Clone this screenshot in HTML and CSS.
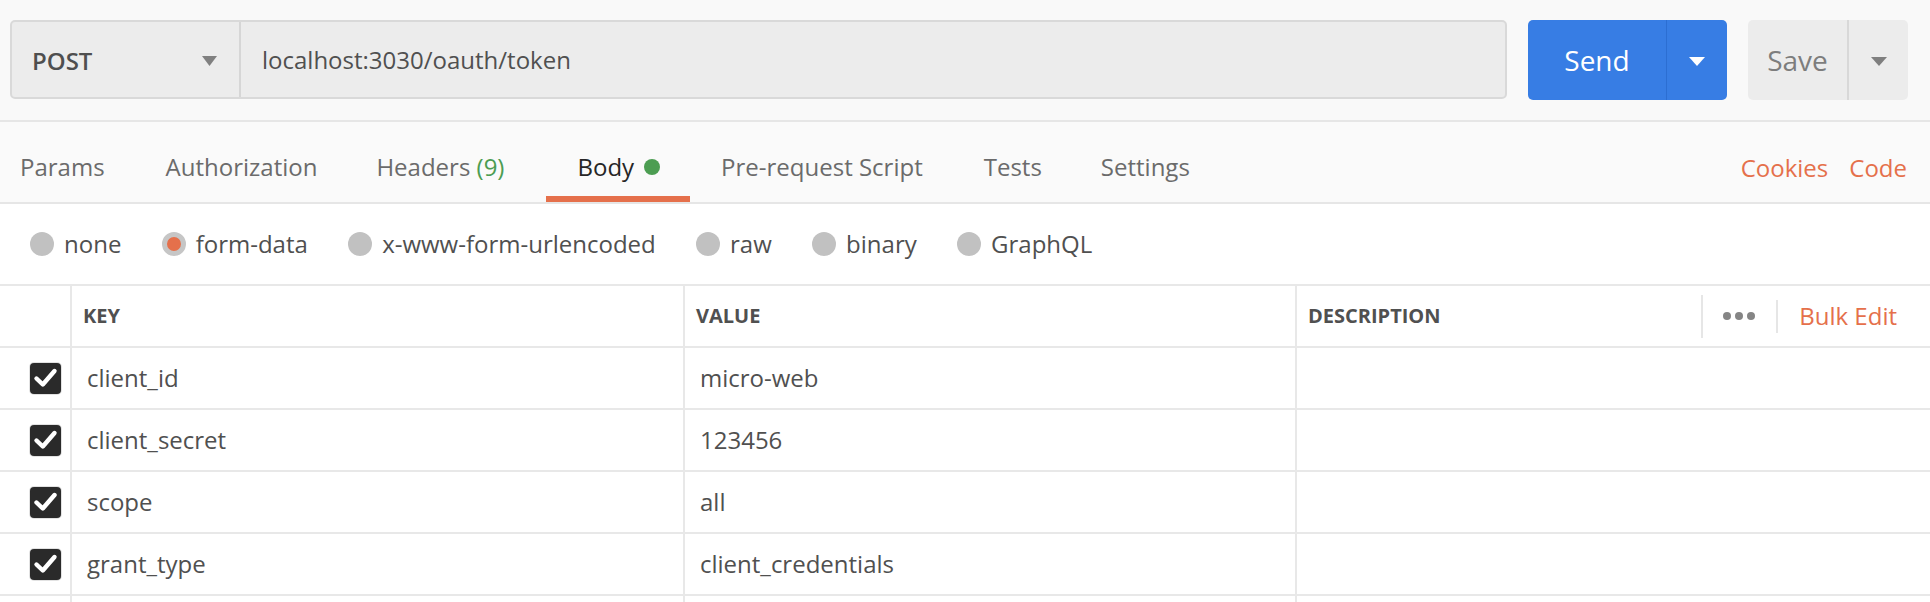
FILE: index.html
```html
<!DOCTYPE html>
<html>
<head>
<meta charset="utf-8">
<link rel="stylesheet" href="styles.css">
</head>
<body>
<div class="app">
  <div class="topbar">
    <div class="url-group">
      <div class="method">
        <span class="method-label">POST</span>
        <svg class="caret" width="15" height="10" viewBox="0 0 15 10"><path d="M0 0 H15 L7.5 10 Z" fill="#808080"/></svg>
      </div>
      <div class="url">localhost:3030/oauth/token</div>
    </div>
    <div class="send-btn">
      <span class="send-label">Send</span>
      <span class="send-caret"><svg width="16" height="9" viewBox="0 0 16 9"><path d="M0 0 H16 L8 9 Z" fill="#ffffff"/></svg></span>
    </div>
    <div class="save-btn">
      <span class="save-label">Save</span>
      <span class="save-caret"><svg width="16" height="9" viewBox="0 0 16 9"><path d="M0 0 H16 L8 9 Z" fill="#7f7f7f"/></svg></span>
    </div>
  </div>

  <div class="tabs">
    <div class="tab tab-first">Params</div>
    <div class="tab tab-auth">Authorization</div>
    <div class="tab tab-headers">Headers <span class="count">(9)</span></div>
    <div class="tab active">Body<span class="dot"></span></div>
    <div class="tab">Pre-request Script</div>
    <div class="tab tab-tests">Tests</div>
    <div class="tab">Settings</div>
    <div class="tabs-right">
      <span class="link">Cookies</span>
      <span class="link">Code</span>
    </div>
  </div>

  <div class="body-types">
    <div class="radio-item"><span class="radio"></span><span>none</span></div>
    <div class="radio-item"><span class="radio checked"></span><span>form-data</span></div>
    <div class="radio-item"><span class="radio"></span><span>x-www-form-urlencoded</span></div>
    <div class="radio-item"><span class="radio"></span><span>raw</span></div>
    <div class="radio-item"><span class="radio"></span><span>binary</span></div>
    <div class="radio-item"><span class="radio"></span><span>GraphQL</span></div>
  </div>

  <div class="kv-table">
    <div class="kv-row kv-head">
      <div class="cell cell-check"></div>
      <div class="cell head-cell">KEY</div>
      <div class="cell head-cell">VALUE</div>
      <div class="cell head-cell head-desc">
        <span>DESCRIPTION</span>
        <div class="head-tools">
          <span class="vsep tall"></span>
          <span class="dots"><i></i><i></i><i></i></span>
          <span class="vsep short"></span>
          <span class="link bulk">Bulk Edit</span>
        </div>
      </div>
    </div>
    <div class="kv-row">
      <div class="cell cell-check"><span class="checkbox"><svg width="31" height="31" viewBox="0 0 31 31"><path d="M6.5 15.5 L12.8 21.5 L24.5 8" fill="none" stroke="#fff" stroke-width="4.4" stroke-linecap="round" stroke-linejoin="round"/></svg></span></div>
      <div class="cell text-cell">client_id</div>
      <div class="cell text-cell">micro-web</div>
      <div class="cell text-cell"></div>
    </div>
    <div class="kv-row">
      <div class="cell cell-check"><span class="checkbox"><svg width="31" height="31" viewBox="0 0 31 31"><path d="M6.5 15.5 L12.8 21.5 L24.5 8" fill="none" stroke="#fff" stroke-width="4.4" stroke-linecap="round" stroke-linejoin="round"/></svg></span></div>
      <div class="cell text-cell">client_secret</div>
      <div class="cell text-cell">123456</div>
      <div class="cell text-cell"></div>
    </div>
    <div class="kv-row">
      <div class="cell cell-check"><span class="checkbox"><svg width="31" height="31" viewBox="0 0 31 31"><path d="M6.5 15.5 L12.8 21.5 L24.5 8" fill="none" stroke="#fff" stroke-width="4.4" stroke-linecap="round" stroke-linejoin="round"/></svg></span></div>
      <div class="cell text-cell">scope</div>
      <div class="cell text-cell">all</div>
      <div class="cell text-cell"></div>
    </div>
    <div class="kv-row">
      <div class="cell cell-check"><span class="checkbox"><svg width="31" height="31" viewBox="0 0 31 31"><path d="M6.5 15.5 L12.8 21.5 L24.5 8" fill="none" stroke="#fff" stroke-width="4.4" stroke-linecap="round" stroke-linejoin="round"/></svg></span></div>
      <div class="cell text-cell">grant_type</div>
      <div class="cell text-cell">client_credentials</div>
      <div class="cell text-cell"></div>
    </div>
    <div class="kv-row">
      <div class="cell cell-check"></div>
      <div class="cell text-cell"></div>
      <div class="cell text-cell"></div>
      <div class="cell text-cell"></div>
    </div>
  </div>
</div>
</body>
</html>
```

FILE: styles.css
```css
html, body {
  margin: 0;
  padding: 0;
  background: #ffffff;
}

body {
  font-family: "Open Sans", "DejaVu Sans", sans-serif;
  color: #505050;
  overflow: hidden;
}

.app {
  width: 1930px;
  height: 602px;
  overflow: hidden;
}

/* ---------- top bar ---------- */
.topbar {
  display: flex;
  align-items: flex-start;
  height: 122px;
  box-sizing: border-box;
  padding: 20px 22px 0 10px;
  background: #f9f9f9;
  border-bottom: 2px solid #e6e6e6;
}

.url-group {
  flex: 1;
  display: flex;
  height: 79px;
  box-sizing: border-box;
  margin-right: 21px;
  background: #ececec;
  border: 2px solid #d9d9d9;
  border-radius: 5px;
}

.method {
  width: 229px;
  flex: none;
  box-sizing: border-box;
  display: flex;
  align-items: center;
  justify-content: space-between;
  padding: 2px 22px 0 20px;
  border-right: 2px solid #d6d6d6;
}

.method-label {
  font-size: 24px;
  line-height: 32px;
  font-weight: 600;
  color: #4f4f4f;
}

.caret {
  display: block;
}

.url {
  display: flex;
  align-items: center;
  padding-left: 21px;
  font-size: 24px;
  line-height: 32px;
  color: #505050;
}

.send-btn {
  display: flex;
  width: 199px;
  height: 80px;
  flex: none;
  border-radius: 5px;
  background: #377de4;
  color: #ffffff;
  margin-right: 21px;
}

.send-label {
  width: 138px;
  display: flex;
  align-items: center;
  justify-content: center;
  font-size: 28px;
  line-height: 36px;
  font-weight: 500;
  border-right: 1px solid #2c6ed2;
}

.send-caret,
.save-caret {
  flex: 1;
  display: flex;
  align-items: center;
  justify-content: center;
  padding-top: 2px;
}

.save-btn {
  display: flex;
  width: 160px;
  height: 80px;
  flex: none;
  border-radius: 5px;
  background: #ececec;
  color: #7d7d7d;
}

.save-label {
  width: 99px;
  display: flex;
  align-items: center;
  justify-content: center;
  font-size: 28px;
  line-height: 36px;
  font-weight: 500;
  border-right: 2px solid #d8d8d8;
}

/* ---------- tabs ---------- */
.tabs {
  display: flex;
  height: 82px;
  box-sizing: border-box;
  background: #fafafa;
  border-bottom: 2px solid #e6e6e6;
}

.tab {
  height: 80px;
  box-sizing: border-box;
  padding: 29px 30px 0 31px;
  font-size: 24px;
  line-height: 32px;
  color: #6b6b6b;
  white-space: nowrap;
}

.tab-first {
  padding-left: 20px;
}

.tab-auth {
  padding-right: 28px;
}

.tab-headers {
  padding-right: 42px;
}

.tab-tests {
  padding-right: 28px;
}

.count {
  color: #4c9d52;
}

.tab.active {
  color: #262626;
  border-bottom: 6px solid #e5704b;
}

.dot {
  display: inline-block;
  width: 16px;
  height: 16px;
  border-radius: 50%;
  background: #4c9d52;
  margin-left: 10px;
  vertical-align: 1px;
}

.tabs-right {
  margin-left: auto;
  display: flex;
  gap: 21px;
  padding: 30px 23px 0 0;
  font-size: 24px;
  line-height: 32px;
}

.link {
  color: #e5704b;
}

/* ---------- body type radios ---------- */
.body-types {
  display: flex;
  align-items: center;
  gap: 40.3px;
  height: 80px;
  padding-left: 30px;
  font-size: 24px;
  line-height: 32px;
  color: #505050;
}

.radio-item {
  display: flex;
  align-items: center;
  gap: 10px;
}

.radio {
  width: 24px;
  height: 24px;
  box-sizing: border-box;
  border-radius: 50%;
  background: #c1c1c1;
  flex: none;
}

.radio.checked {
  background: #e5704b;
  border: 5.5px solid #c6c6c6;
}

/* ---------- key/value table ---------- */
.kv-table {
  border-top: 2px solid #e8e8e8;
}

.kv-row {
  display: grid;
  grid-template-columns: 70px 613px 612px 1fr;
  height: 62px;
  box-sizing: border-box;
  border-bottom: 2px solid #e8e8e8;
}

.cell {
  display: flex;
  align-items: center;
  box-sizing: border-box;
  min-width: 0;
}

.cell + .cell {
  border-left: 2px solid #e8e8e8;
}

.cell-check {
  padding-left: 30px;
}

.head-cell {
  padding-left: 11px;
  font-size: 20px;
  line-height: 24px;
  font-weight: 700;
  color: #505050;
}

.head-desc {
  justify-content: space-between;
  padding-right: 33px;
}

.head-tools {
  display: flex;
  align-items: center;
  font-weight: 400;
}

.vsep {
  display: block;
  width: 2px;
  background: #e6e6e6;
}

.vsep.tall {
  height: 43px;
  margin-right: 20px;
}

.vsep.short {
  height: 33px;
  margin: 0 21px;
}

.dots {
  display: flex;
  gap: 4px;
}

.dots i {
  display: block;
  width: 8px;
  height: 8px;
  border-radius: 50%;
  background: #858585;
}

.bulk {
  font-size: 24px;
  line-height: 32px;
}

.text-cell {
  padding-left: 15px;
  font-size: 24px;
  line-height: 32px;
  color: #505050;
}

.checkbox {
  display: block;
  width: 31px;
  height: 31px;
  border-radius: 4px;
  background: #2a2a2a;
  box-shadow: 0 0 0 1px #e2e2e2;
}

.checkbox svg {
  display: block;
}
```
